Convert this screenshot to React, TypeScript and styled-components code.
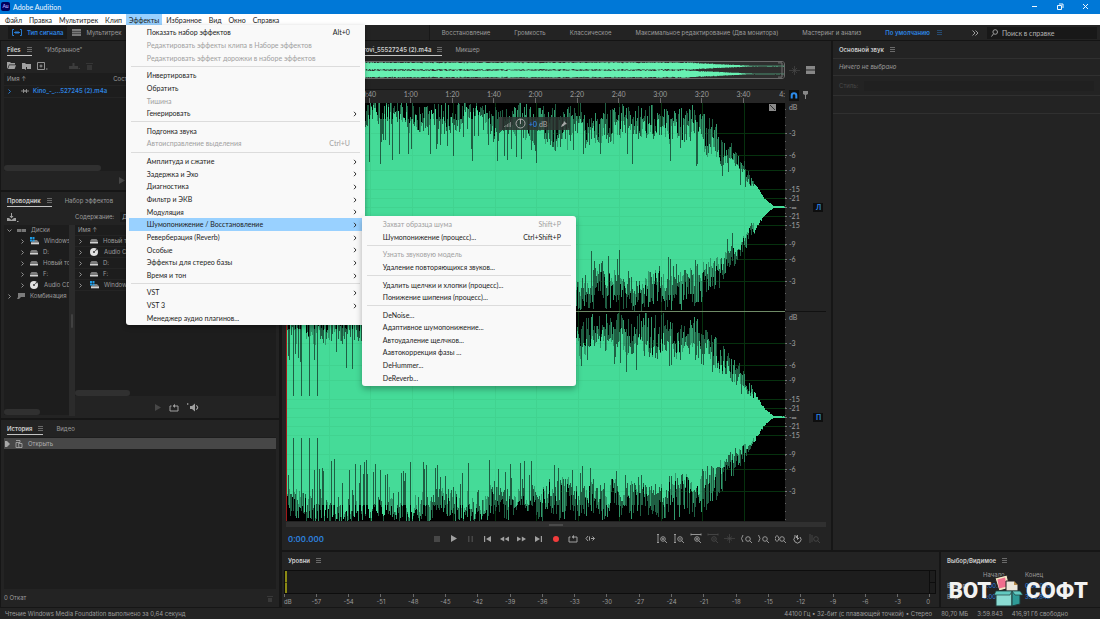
import React from "react";
import styled, { createGlobalStyle, css } from "styled-components";

const GlobalStyle = createGlobalStyle`
  * { box-sizing: border-box; }
  body { margin: 0; background: #161616; }
  button, input, select, table { font: inherit; color: inherit; }
  button { border: 0; padding: 0; background: none; display: flex; align-items: center; white-space: nowrap; text-align: left; }
  ul { list-style: none; margin: 0; padding: 0; }
  svg { display: block; flex: none; }
`;

const BLUE = "#2d84e0";
const GREEN = "#45db98";
const MENU_FONT = `Lato, "Liberation Sans", sans-serif`;

const Frame = styled.div`
  position: relative;
`;
const Page = styled.div`
  min-height: 100vh;
  display: flex;
  flex-direction: column;
  font-family: Inter, "Noto Sans", sans-serif;
  font-size: 6px;
  line-height: 10px;
  color: #9c9c9c;
  overflow: hidden;
`;

/* ---------- window chrome ---------- */

const TitleBar = styled.header`
  height: 14px;
  display: flex;
  align-items: center;
  gap: 3px;
  padding: 0 11px 1px 1px;
  background: #0078d7;
  color: #f0f8ff;
  font-family: ${MENU_FONT};
  font-size: 7px;
`;
const AppBadge = styled.span`
  width: 9px;
  height: 9px;
  border-radius: 2px;
  background: #00005b;
  color: #a6a6ff;
  font-size: 5px;
  font-weight: 700;
  line-height: 9px;
  text-align: center;
`;
const WindowButtons = styled.div`
  margin-left: auto;
  display: flex;
  gap: 18px;
`;
const MenuBar = styled.nav`
  height: 11px;
  display: flex;
  padding-left: 2px;
  background: #fff;
  color: #1b1b1b;
  font-family: ${MENU_FONT};
  font-size: 7px;
  position: relative;
  z-index: 5;
`;
const MenuSlot = styled.div`
  position: relative;
  display: flex;
`;
const MenuTitle = styled.button<{ $open?: boolean }>`
  padding: 0 3px;
  margin-right: 1px;
  background: ${(p) => (p.$open ? "#99d1ff" : "transparent")};
`;
const menuSurface = css`
  position: absolute;
  display: flex;
  flex-direction: column;
  background: #f9f9f9;
  border-radius: 0 0 3px 3px;
`;
const Menu = styled.div`
  ${menuSurface}
  top: 100%;
  left: 0;
  width: 239px;
  height: 300px;
  padding: 1px 3px;
  box-shadow: 0 2px 5px rgba(0, 0, 0, 0.35);
`;
const SubMenu = styled.div`
  ${menuSurface}
  top: -2px;
  left: 233px;
  width: 214px;
  height: 170px;
  padding: 2px 3px;
  border-radius: 3px;
  box-shadow: 0 3px 6px rgba(0, 0, 0, 0.3);
`;
const MenuRow = styled.div<{ $active?: boolean }>`
  flex: 1;
  min-height: 0;
  position: relative;
  display: flex;
  background: ${(p) => (p.$active ? "#99d1ff" : "transparent")};
`;
const MenuAction = styled.button`
  flex: 1;
  padding: 0 12px 0 18px;
  &:disabled { color: #a0a0a0; }
`;
const Shortcut = styled.span`
  margin-left: auto;
`;
const MenuArrow = styled.svg`
  position: absolute;
  right: 5px;
  top: 4px;
`;
const MenuRule = styled.hr`
  width: calc(100% - 4px);
  height: 1px;
  margin: 2px;
  border: 0;
  background: #dcdcdc;
`;

/* ---------- workspace bar ---------- */

const WorkspaceBar = styled.div`
  height: 16px;
  display: flex;
  align-items: center;
  padding: 0 3px 0 8px;
  border-bottom: 1px solid #141414;
  background: #232323;
`;
const ModeButton = styled.button<{ $on?: boolean }>`
  height: 13px;
  gap: 5px;
  padding: 0 4px;
  margin-right: 1px;
  font-weight: ${(p) => (p.$on ? 600 : 400)};
  color: ${(p) => (p.$on ? BLUE : "inherit")};
  background: ${(p) => (p.$on ? "#191919" : "transparent")};
`;
const Workspaces = styled.div`
  margin-left: auto;
  height: 15px;
  display: flex;
  align-items: center;
  gap: 24px;
  padding: 0 8px 0 12px;
  border-left: 1px solid #181818;
`;
const Workspace = styled.button<{ $on?: boolean }>`
  gap: 7px;
  color: ${(p) => (p.$on ? BLUE : "inherit")};
  font-weight: ${(p) => (p.$on ? 600 : 400)};
  &:last-child { margin-left: 6px; }
`;
const SearchBox = styled.label`
  width: 110px;
  height: 12px;
  display: flex;
  align-items: center;
  gap: 4px;
  padding-left: 4px;
  background: #181818;
`;
const SearchInput = styled.input`
  flex: 1;
  min-width: 0;
  border: 0;
  padding: 0;
  background: none;
  font-family: ${MENU_FONT};
  font-size: 7px;
  &::placeholder { color: #b4b4b4; opacity: 1; }
`;

/* ---------- panels ---------- */

const Body = styled.main`
  flex: 1;
  display: flex;
  gap: 3px;
  padding-left: 1px;
`;
const LeftColumn = styled.div`
  width: 278px;
  display: flex;
  flex-direction: column;
  gap: 2px;
`;
const MainColumn = styled.div`
  flex: 1;
  min-width: 0;
  display: flex;
  flex-direction: column;
  gap: 2px;
`;
const TopRow = styled.div`
  flex: 1;
  display: flex;
  gap: 2px;
`;
const BottomRow = styled.div`
  height: 55px;
  display: flex;
  gap: 2px;
`;
const Panel = styled.section<{ $height?: number; $width?: number }>`
  ${(p) => (p.$height ? `height: ${p.$height}px;` : p.$width ? "" : "flex: 1;")}
  ${(p) => (p.$width ? `width: ${p.$width}px;` : "")}
  min-width: 0;
  display: flex;
  flex-direction: column;
  background: #232323;
`;
const Tabs = styled.div`
  height: 17px;
  display: flex;
  align-items: flex-start;
  gap: 13px;
  padding: 3px 6px 0;
`;
const Tab = styled.button<{ $on?: boolean; $line?: boolean }>`
  height: 12px;
  gap: 6px;
  font-weight: ${(p) => (p.$on ? 600 : 400)};
  color: ${(p) => (p.$on ? "#cfcfcf" : "inherit")};
  border-bottom: 1px solid ${(p) => (p.$line ? "#c4c4c4" : "transparent")};
`;
const Tools = styled.div<{ $gap: number; $h: number; $justify?: string }>`
  height: ${(p) => p.$h}px;
  display: flex;
  align-items: center;
  justify-content: ${(p) => p.$justify || "flex-start"};
  gap: ${(p) => p.$gap}px;
  padding: 0 6px;
`;
const IconButton = styled.button<{ $dim?: boolean }>`
  color: ${(p) => (p.$dim ? "#474747" : "#a0a0a0")};
`;
const ListBox = styled.div<{ $flush?: boolean }>`
  flex: 1;
  min-height: 0;
  min-width: 0;
  margin: 0 3px 0 ${(p) => (p.$flush ? 0 : 3)}px;
  display: flex;
  flex-direction: column;
  justify-content: space-between;
  background: #1d1d1d;
`;
const Thumb = styled.div<{ $w: number }>`
  width: ${(p) => p.$w}px;
  height: 6px;
  border-radius: 3px;
  background: #303030;
`;
const FileTable = styled.table`
  width: 100%;
  border-collapse: collapse;
  th, td { padding: 0 3px; height: 12px; text-align: left; font-weight: 400; }
  th:last-child { width: 168px; }
  td { border-top: 1px solid #242424; border-bottom: 1px solid #242424; }
`;
const FileName = styled.span`
  display: flex;
  align-items: center;
  gap: 4px;
  color: ${BLUE};
  font-weight: 600;
  white-space: nowrap;
  svg:first-child { margin-right: 5px; }
`;
const BrowserSplit = styled.div`
  flex: 1;
  min-height: 0;
  display: flex;
`;
const Tree = styled.div`
  width: 65px;
  margin: 0 0 3px 3px;
  display: flex;
  flex-direction: column;
  justify-content: space-between;
  background: #1d1d1d;
`;
const TreeScroller = styled.div`
  width: 6px;
  margin-bottom: 2px;
  padding: 89px 2px 0;
  background: #2b2b2b;
  &::after { content: ""; display: block; height: 14px; border-radius: 1px; background: #414141; }
`;
const BrowserSide = styled.div`
  flex: 1;
  min-width: 0;
  display: flex;
  flex-direction: column;
`;
const TreeRow = styled.li<{ $depth?: number; $line?: boolean }>`
  height: 11px;
  display: flex;
  align-items: center;
  gap: 5px;
  padding-left: ${(p) => (p.$depth ? 16 : 3)}px;
  overflow: hidden;
  white-space: nowrap;
  border-bottom: 1px solid ${(p) => (p.$line ? "#242424" : "transparent")};
  svg:first-child { margin-right: ${(p) => (p.$line ? 2 : 0)}px; }
`;
const ContentField = styled.label`
  margin-left: 56px;
  display: flex;
  gap: 6px;
`;
const PlainSelect = styled.select`
  appearance: none;
  border: 0;
  padding: 0 2px;
  background: #1b1b1b;
  color: #b4b4b4;
`;
const HistoryRow = styled.li`
  height: 11px;
  margin-top: 1px;
  display: flex;
  align-items: center;
  gap: 5px;
  background: #474747;
  color: #b0b0b0;
`;
const PanelFooter = styled.div`
  height: 18px;
  display: flex;
  justify-content: space-between;
  align-items: center;
  padding: 0 6px 0 3px;
`;

/* ---------- editor ---------- */

const EditorGrid = styled.div`
  flex: 1;
  min-height: 0;
  display: grid;
  grid-template-columns: 1fr 41px;
  grid-template-rows: 31px 14px 1fr 6px;
  margin: 0 5px 0 4px;
`;
const Overview = styled.div`
  height: 18px;
  margin-top: 3px;
  border: 1px solid #6a6a6a;
  border-radius: 3px;
  background: #141414;
  overflow: hidden;
  svg { width: 100%; height: 100%; }
`;
const SideTools = styled.div<{ $pt: number; $gap: number }>`
  display: flex;
  align-items: flex-start;
  gap: ${(p) => p.$gap}px;
  padding: ${(p) => p.$pt}px 0 0 4px;
`;
const Ruler = styled.div`
  display: flex;
  border-top: 1px solid #161616;
  background: #262626;
  overflow: hidden;
`;
const RulerCell = styled.span<{ $half?: boolean; $last?: boolean }>`
  flex: ${(p) => (p.$half ? 1 : 2)} 1 0;
  min-width: 0;
  height: 13px;
  display: flex;
  flex-direction: column;
  align-items: center;
  line-height: 8px;
  font-size: 7px;
  font-family: ${MENU_FONT};
  ${(p) => p.$last && "align-items: flex-end; overflow: hidden;"}
  &::after {
    content: "";
    width: 1px;
    height: 5px;
    background: ${(p) => (p.$half ? "transparent" : "#6a6a6a")};
  }
`;
const WaveArea = styled.div`
  position: relative;
  background: #000;
  border-left: 1px solid #a01818;
  min-height: 0;
`;
const WaveSvg = styled.svg`
  position: absolute;
  inset: 0;
  width: 100%;
  height: 100%;
`;
const Hud = styled.div`
  position: absolute;
  top: 14px;
  left: 212px;
  width: 71px;
  height: 13px;
  display: flex;
  align-items: center;
  gap: 3px;
  padding: 0 2px;
  background: rgba(45, 50, 48, 0.85);
  border-left: 3px solid #3a3f3d;
  color: #a8a8a8;
  font-size: 7px;
  font-family: ${MENU_FONT};
  b { font-weight: 600; color: ${BLUE}; }
`;
const CornerMark = styled.svg`
  position: absolute;
  top: 1px;
  right: 9px;
`;
const ScaleSvg = styled.svg`
  width: 41px;
  height: 100%;
  fill: #a0a0a0;
  font-size: 7px;
  font-family: ${MENU_FONT};
`;
const WaveScroll = styled.div`
  grid-column: 1 / -1;
  display: flex;
  justify-content: center;
  align-items: center;
  margin-top: 1px;
  background: #303030;
  &::after { content: ""; width: 14px; height: 2px; background: #4a4a4a; }
`;
const Transport = styled.div`
  height: 23px;
  display: flex;
  align-items: center;
  padding: 0 8px 0 6px;
`;
const TimeCode = styled.output`
  width: 140px;
  padding-top: 1px;
  font-family: "Open Sans", sans-serif;
  font-size: 9px;
  font-weight: 600;
  color: ${BLUE};
`;
const ButtonStrip = styled.div`
  display: grid;
  grid-auto-flow: column;
  grid-auto-columns: 17px;
  justify-items: center;
`;
const Spring = styled.div`
  flex: 1;
`;

/* ---------- essential sound, levels, selection ---------- */

const SoundRow = styled.div<{ $h: number }>`
  height: ${(p) => p.$h}px;
  display: flex;
  align-items: center;
  padding: 0 6px;
  border-bottom: 1px solid #303030;
  font-style: ${(p) => (p.$h === 17 ? "italic" : "normal")};
`;
const StyleLabel = styled.label`
  flex: 1;
  display: flex;
  align-items: center;
  gap: 6px;
  color: #484848;
  select { flex: 1; background: #202020; }
`;
const Meter = styled.div`
  height: 24px;
  margin: 1px 3px 0 2px;
  display: flex;
  border: 1px solid #0d0d0d;
  background: #1d1d1d;
`;
const MeterFill = styled.div`
  width: 2px;
  background: linear-gradient(#8c8a14 11px, #4a490c 11px, #4a490c 12px, #8c8a14 12px);
`;
const MeterClip = styled.div`
  width: 6px;
  margin-left: auto;
  border-left: 1px solid #0d0d0d;
  background: linear-gradient(transparent 11px, #0d0d0d 11px, #0d0d0d 12px, transparent 12px);
`;
const LevelScale = styled.div`
  display: flex;
  margin: 0 9px 0 2px;
`;
const LevelCell = styled.span<{ $half?: boolean; $end?: boolean }>`
  flex: ${(p) => (p.$half ? 1 : 2)} 1 0;
  min-width: 0;
  display: flex;
  flex-direction: column;
  line-height: 9px;
  align-items: ${(p) => (p.$end ? "flex-end" : p.$half ? "flex-start" : "center")};
  &::before { content: ""; width: 1px; height: 3px; background: #6a6a6a; }
`;
const SelectionTable = styled.table`
  margin-left: 6px;
  width: 132px;
  table-layout: fixed;
  border-collapse: collapse;
  th, td { padding: 0; height: 11px; font-weight: 400; text-align: left; }
  th:nth-child(1), thead td { width: 36px; }
  th:nth-child(2) { width: 42px; }
  td { color: ${BLUE}; }
`;
const StatusBar = styled.footer`
  height: 12px;
  display: flex;
  align-items: center;
  gap: 9px;
  padding: 0 32px 0 5px;
  border-top: 1px solid #161616;
  background: #232323;
  span:first-child { margin-right: auto; }
`;
const Watermark = styled.div`
  position: absolute;
  right: 12px;
  bottom: 12px;
  z-index: 6;
  display: flex;
  align-items: center;
  gap: 3px;
  font-family: Roboto, sans-serif;
  font-size: 22px;
  line-height: 32px;
  font-weight: 900;
  color: #f2f2f2;
`;

/* ---------- icons ---------- */

type IconProps = { w?: number; h?: number; sw?: number; fill?: boolean; children?: React.ReactNode };
const Icon = ({ w = 10, h = 10, sw = 1, fill, children }: IconProps) => (
  <svg
    width={w}
    height={h}
    viewBox={`0 0 ${w} ${h}`}
    fill={fill ? "currentColor" : "none"}
    stroke={fill ? "none" : "currentColor"}
    strokeWidth={sw}
    aria-hidden="true"
  >
    {children}
  </svg>
);
const Burger = () => (
  <Icon w={5} h={5} sw={0.6}><path d="M0 .5h5M0 2.5h5M0 4.5h5" opacity=".7" /></Icon>
);
const Chevron = ({ down }: { down?: boolean }) => (
  <Icon w={5} h={5} sw={0.9}><path d={down ? "M.5 1.5 2.5 3.5 4.5 1.5" : "M1.5.5 3.5 2.5 1.5 4.5"} /></Icon>
);
const DriveIcon = () => (
  <Icon w={8} h={6} fill><path d="M1.5 1h5L8 3H0z" opacity=".75" /><rect y="3.4" width="8" height="2" rx=".5" fill="#d2d2d2" /></Icon>
);
const WindowsDrive = () => (
  <Icon w={9} h={8} fill>
    <path d="M3 3h4L8.8 5H1z" opacity=".75" />
    <rect x="1" y="5.3" width="8" height="2" fill="#d2d2d2" />
    <path d="M0 0h2v2H0zM2.5 0h2v2h-2zM0 2.5h2v2H0zM2.5 2.5h2v2h-2z" fill="#1c9be6" />
  </Icon>
);
const DiscIcon = () => (
  <Icon w={9} h={8} fill>
    <circle cx="4" cy="4" r="4" fill="#e2e2e2" />
    <path d="M4 4 7.6 1.4 6.6.4z" fill="#444" />
    <circle cx="4" cy="4" r="1" fill="#333" />
  </Icon>
);
const DrivesIcon = () => (
  <Icon w={9} h={5} fill><path d="M0 1h4v3H0zM4.5 1H9v3H4.5z" opacity=".7" /></Icon>
);
const FlagIcon = () => (
  <Icon w={8} h={6} fill><path d="M1 0h7v4H4L2 6H0l1-2z" opacity=".75" /></Icon>
);
const WaveIcon = () => (
  <Icon w={8} h={6} sw={0.8}><path d="M0 3h8M2.5 1v4M4 2v2M5.5 1v4" stroke="#a0a0a0" /></Icon>
);
const LoopIcon = () => (
  <Icon w={10} h={9}><path d="M2.5 3H1v5h8V3H4" /><path d="M6 .8 4 3l2 2z" fill="currentColor" stroke="none" /></Icon>
);
const PlayIcon = () => (
  <Icon w={6} h={7} fill><path d="M0 0l6 3.5L0 7z" /></Icon>
);
const Magnifier = ({ extra, plus = "" }: { extra: string; plus?: string }) => (
  <Icon w={12} h={11} sw={0.9}>
    <path d={extra} />
    <circle cx="7" cy="6" r="2.3" />
    <path d={"M8.7 7.7 11 10" + plus} />
  </Icon>
);

/* ---------- waveform ---------- */

const random = (seed: number) => () => {
  seed = (seed * 1664525 + 1013904223) % 4294967296;
  return seed / 4294967296;
};
const FADE: [number, number][] = [
  [0, 1], [400, 1], [414, 0.94], [431, 0.8], [439, 0.68], [452, 0.52], [461, 0.38],
  [469, 0.22], [477, 0.09], [486, 0.01], [498, 0.004],
];
const fadeAt = (x: number) => {
  for (let i = 1; i < FADE.length; i++) {
    const [x0, y0] = FADE[i - 1];
    const [x1, y1] = FADE[i];
    if (x <= x1) return y0 + ((y1 - y0) * (x - x0)) / (x1 - x0);
  }
  return 0;
};
const COLS = 498;
const buildHalf = (seed: number, mid: number, dir: 1 | -1) => {
  const rnd = random(seed);
  let dark = "";
  let soft = "";
  let solid = "";
  let base = 0.84;
  for (let x = 0; x < COLS; x++) {
    const fade = fadeAt(x);
    const calm = x > 466;
    base += (rnd() - 0.5) * 0.12;
    const [lo, hi] = x < 198 ? [0.76, 0.92] : x < 300 ? [0.62, 0.78] : [0.62, 0.78];
    base = Math.max(lo, Math.min(hi, base));
    let body = base + (rnd() - 0.5) * 0.18;
    let peak = body + rnd() * 0.2;
    let faint = rnd() < 0.55;
    if (rnd() < 0.4) peak = 0.84 + rnd() * 0.16;
    if (rnd() < (x < 300 ? 0.24 : 0.14)) {
      body = 0.4 + rnd() * 0.4;
      peak = Math.max(0.85, body + 0.2);
      faint = true;
    }
    if (x === 6 || x === 14 || x === 22 || x === 30) {
      body = 0.2;
      peak = 0.9;
      faint = true;
    }
    if (calm) {
      body = 0.82 + rnd() * 0.18;
      peak = body;
    }
    const a = Math.max(1, Math.round(Math.min(1, peak) * fade * 104)) * dir;
    const b = Math.max(0.5, Math.round(Math.min(0.98, body) * fade * 104)) * dir;
    if (faint) dark += `M${x} ${mid}h1v${a}h-1z`;
    else soft += `M${x} ${mid}h1v${a}h-1z`;
    solid += `M${x} ${mid}h1v${b}h-1z`;
  }
  return { dark, soft, solid };
};
const HALVES = [buildHalf(11, 104, -1), buildHalf(23, 104, 1), buildHalf(37, 314, -1), buildHalf(53, 314, 1)];

const overviewPath = (mid: number, seed: number) => {
  const rnd = random(seed);
  let d = "";
  for (let x = 0; x < COLS; x++) {
    const f = x < 400 ? 1 : Math.max(0.08, 1 - (x - 400) / 72);
    const up = (0.75 + rnd() * 0.25) * 4.4 * f;
    d += `M${x} ${(mid - up).toFixed(1)}h1v${(up * 2).toFixed(1)}h-1z`;
  }
  return d;
};

const DB_MARKS: [string, number][] = [
  ["dB", 4], ["-3", 30], ["-6", 52], ["-9", 67], ["-15", 86], ["-21", 95], ["-∞", 104],
  ["-21", 113], ["-15", 122], ["-9", 141], ["-6", 156], ["-3", 178],
];
const pct = (v: number) => `${(v / 418) * 100}%`;
const TIMES = ["0:20", "0:40", "1:00", "1:20", "1:40", "2:00", "2:20", "2:40", "3:00", "3:20", "3:40"];
const LEVELS = Array.from({ length: 19 }, (_, i) => String(-57 + i * 3));

const GridLines = ({ opacity }: { opacity: number }) => (
  <g fill="#0a4a16" opacity={opacity}>
    {TIMES.map((t, i) => <rect key={t} x={(i + 1) * 41.5} y="0" width="1" height="418" />)}
    {[0, 210].map((o) =>
      DB_MARKS.slice(1).map(([, y], i) => <rect key={`${o}-${i}`} x="0" y={y + o} width="498" height="1" />)
    )}
  </g>
);

const Waveform = () => (
  <WaveSvg viewBox="0 0 498 418" preserveAspectRatio="none" shapeRendering="crispEdges" role="img" aria-label="Сигнал">
    <GridLines opacity={0.65} />
    {HALVES.map((h, i) => (
      <g key={i}>
        <path d={h.dark} fill="#1f5f43" />
        <path d={h.soft} fill="#319a6c" />
        <path d={h.solid} fill={GREEN} />
      </g>
    ))}
    <GridLines opacity={0.05} />
    <rect x="0" y="208" width="498" height="1" fill="#6e8a66" />
    <rect x="484" y="104" width="14" height="1" fill={GREEN} />
    <rect x="484" y="314" width="14" height="1" fill={GREEN} />
  </WaveSvg>
);

const DbScale = () => (
  <ScaleSvg aria-hidden="true">
    {[0, 210].map((o) => (
      <g key={o}>
        {DB_MARKS.map(([t, y], i) => (
          <React.Fragment key={i}>
            <text x="4" y={pct(y + o)} dy="3">{t}</text>
            {i > 0 && <rect x="0" y={pct(y + o)} width="2" height="1" fill="#777" />}
          </React.Fragment>
        ))}
        {Array.from({ length: 26 }, (_, i) => (
          <rect key={`t${i}`} x="0" y={pct(o + 6 + i * 8)} width="1" height="1" fill="#666" />
        ))}
      </g>
    ))}
    <rect x="0" y={pct(208)} width="41" height="1" fill="#111" />
    <rect x="28" y={pct(100)} width="10" height="9" fill="#0e0e0e" />
    <text x="31" y={pct(107)} fill={BLUE} fontWeight="700">Л</text>
    <rect x="28" y={pct(310)} width="10" height="9" fill="#0e0e0e" />
    <text x="31" y={pct(317)} fill={BLUE} fontWeight="700">П</text>
  </ScaleSvg>
);

/* ---------- menus ---------- */

type Entry = { label: string; key?: string; off?: boolean; more?: boolean; sub?: Entry[][] };

const DENOISE: Entry[][] = [
  [{ label: "Захват образца шума", key: "Shift+P", off: true }, { label: "Шумопонижение (процесс)...", key: "Ctrl+Shift+P" }],
  [{ label: "Узнать звуковую модель", off: true }, { label: "Удаление повторяющихся звуков..." }],
  [{ label: "Удалить щелчки и хлопки (процесс)..." }, { label: "Понижение шипения (процесс)..." }],
  [
    { label: "DeNoise..." }, { label: "Адаптивное шумопонижение..." }, { label: "Автоудаление щелчков..." },
    { label: "Аавтокоррекция фазы ..." }, { label: "DeHummer..." }, { label: "DeReverb..." },
  ],
];
const EFFECTS: Entry[][] = [
  [
    { label: "Показать набор эффектов", key: "Alt+0" },
    { label: "Редактировать эффекты клипа в Наборе эффектов", off: true },
    { label: "Редактировать эффект дорожки в наборе эффектов", off: true },
  ],
  [{ label: "Инвертировать" }, { label: "Обратить" }, { label: "Тишина", off: true }, { label: "Генерировать", more: true }],
  [{ label: "Подгонка звука" }, { label: "Автоисправление выделения", key: "Ctrl+U", off: true }],
  [
    { label: "Амплитуда и сжатие", more: true }, { label: "Задержка и Эхо", more: true }, { label: "Диагностика", more: true },
    { label: "Фильтр и ЭКВ", more: true }, { label: "Модуляция", more: true },
    { label: "Шумопонижение / Восстановление", more: true, sub: DENOISE },
    { label: "Реверберация (Reverb)", more: true }, { label: "Особые", more: true },
    { label: "Эффекты для стерео базы", more: true }, { label: "Время и тон", more: true },
  ],
  [{ label: "VST", more: true }, { label: "VST 3", more: true }, { label: "Менеджер аудио плагинов..." }],
];

const MenuGroups = ({ groups }: { groups: Entry[][] }) => (
  <>
    {groups.map((group, g) => (
      <React.Fragment key={g}>
        {g > 0 && <MenuRule />}
        {group.map((e) => (
          <MenuRow key={e.label} $active={!!e.sub}>
            <MenuAction disabled={e.off}>
              {e.label}
              {e.key && <Shortcut>{e.key}</Shortcut>}
            </MenuAction>
            {e.more && (
              <MenuArrow width="4" height="6" viewBox="0 0 4 6" fill="none" stroke="#333" aria-hidden="true">
                <path d="M1 .8 3 3 1 5.2" />
              </MenuArrow>
            )}
            {e.sub && <SubMenu><MenuGroups groups={e.sub} /></SubMenu>}
          </MenuRow>
        ))}
      </React.Fragment>
    ))}
  </>
);

const MENUS = ["Файл", "Правка", "Мультитрек", "Клип", "Эффекты", "Избранное", "Вид", "Окно", "Справка"];
const WORKSPACES = ["Восстановление", "Громкость", "Классическое", "Максимальное редактирование (Два монитора)", "Мастеринг и анализ"];

const LeftPanels = () => (
  <LeftColumn>
    <Panel $height={149}>
      <Tabs>
        <Tab $on $line>Files<Burger /></Tab>
        <Tab>"Избранное"</Tab>
      </Tabs>
      <Tools $gap={6} $h={15}>
        <IconButton aria-label="Открыть"><Icon w={9} h={7} fill><path d="M0 0h3l1 1h4v1.5H2L.5 6.5H0zM2.4 3.2H9L7.6 7H1z" /></Icon></IconButton>
        <IconButton aria-label="Импорт"><Icon w={9} h={8} fill><path d="M0 1h3l1 1h5v5H5V5H3v2H0zM1 6l3-2v4z" /></Icon></IconButton>
        <IconButton aria-label="Создать"><Icon w={11} h={8} sw={0.9}><path d="M.5.5h7v7h-7zM2.5 4h3M4 2.5v3M9 7h1.5" /></Icon></IconButton>
        <Icon w={9} h={8} />
        <IconButton $dim aria-label="Вставить"><Icon w={11} h={8} fill><path d="M0 4h9v3H0zM3.5 1h2v3h-2zM9.5 6h1.5v1H9.5z" opacity=".7" /></Icon></IconButton>
        <IconButton $dim aria-label="Удалить"><Icon w={7} h={8} fill><path d="M0 1h7v1H0zM1 3h5v5H1z" opacity=".5" /></Icon></IconButton>
      </Tools>
      <ListBox>
        <FileTable>
          <thead><tr><th scope="col">Имя ↑</th><th scope="col">Сост.</th></tr></thead>
          <tbody>
            <tr>
              <td><FileName><Chevron /><WaveIcon />Kino_-_...527245 (2).m4a</FileName></td>
              <td />
            </tr>
          </tbody>
        </FileTable>
        <Thumb $w={97} />
      </ListBox>
      <Tools $gap={4} $h={19} $justify="center">
        <IconButton $dim aria-label="Воспроизвести"><PlayIcon /></IconButton>
        <Icon w={32} h={7} />
      </Tools>
    </Panel>

    <Panel $height={226}>
      <Tabs>
        <Tab $on $line>Проводник<Burger /></Tab>
        <Tab>Набор эффектов</Tab>
      </Tabs>
      <Tools $gap={0} $h={16}>
        <IconButton aria-label="Ярлыки"><Icon w={12} h={9} fill><path d="M4 0h1v3h1.5l-2 2.5-2-2.5H4zM0 5h2l2.5 2L7 5h2v3H0zM10 8h1.5v1H10z" /></Icon></IconButton>
        <ContentField>Содержание:<PlainSelect><option>Диски</option></PlainSelect></ContentField>
      </Tools>
      <BrowserSplit>
        <Tree>
          <ul>
            <TreeRow><Chevron down /><DrivesIcon />Диски</TreeRow>
            <TreeRow $depth={1}><Chevron /><WindowsDrive />Windows</TreeRow>
            <TreeRow $depth={1}><Chevron /><DriveIcon />D:</TreeRow>
            <TreeRow $depth={1}><Chevron /><DriveIcon />Новый том</TreeRow>
            <TreeRow $depth={1}><Chevron /><DriveIcon />F:</TreeRow>
            <TreeRow $depth={1}><Chevron /><DiscIcon />Audio CD</TreeRow>
            <TreeRow><Chevron /><FlagIcon />Комбинация</TreeRow>
          </ul>
          <Thumb $w={36} />
        </Tree>
        <TreeScroller />
        <BrowserSide>
          <ListBox $flush>
            <ul>
              <TreeRow $line>Имя ↑</TreeRow>
              <TreeRow $line><Chevron /><DriveIcon />Новый том</TreeRow>
              <TreeRow $line><Chevron /><DiscIcon />Audio CD</TreeRow>
              <TreeRow $line><Chevron /><DriveIcon />D:</TreeRow>
              <TreeRow $line><Chevron /><DriveIcon />F:</TreeRow>
              <TreeRow $line><Chevron /><WindowsDrive />Windows</TreeRow>
            </ul>
            <Thumb $w={55} />
          </ListBox>
          <Tools $gap={8} $h={22} $justify="center">
            <IconButton $dim aria-label="Воспроизвести"><PlayIcon /></IconButton>
            <IconButton aria-label="Повтор"><LoopIcon /></IconButton>
            <IconButton aria-label="Автовоспроизведение"><Icon w={12} h={9} fill><path d="M0 0l2 1-2 1zM3 3h2l3-2.5v8L5 6H3zM9 2c3 1 3 4 0 5V6c1.5-1 1.5-2 0-3z" /></Icon></IconButton>
          </Tools>
        </BrowserSide>
      </BrowserSplit>
    </Panel>

    <Panel>
      <Tabs>
        <Tab $on $line>История<Burger /></Tab>
        <Tab>Видео</Tab>
      </Tabs>
      <ListBox>
        <ul>
          <HistoryRow>
            <Icon w={6} h={6} fill><path d="M1 0h2l3 3-3 3H1z" fill="#a8a8a8" /></Icon>
            <Icon w={8} h={8} sw={0.8}><path d="M1 .5h4v2h-4v5h3M3.5 3.5h3.5v4H4z" /></Icon>
            Открыть
          </HistoryRow>
        </ul>
      </ListBox>
      <PanelFooter>
        0 Откат
        <IconButton $dim aria-label="Удалить"><Icon w={6} h={7} fill><path d="M0 1h6v1H0zM1 3h4v4H1z" opacity=".6" /></Icon></IconButton>
      </PanelFooter>
    </Panel>
  </LeftColumn>
);

const PLAYBACK: [string, boolean, React.ReactNode][] = [
  ["Стоп", true, <Icon w={6} h={6} fill><path d="M0 0h6v6H0z" /></Icon>],
  ["Воспроизвести", false, <PlayIcon />],
  ["Пауза", true, <Icon w={5} h={6} fill><path d="M0 0h1.5v6H0zM3.5 0H5v6H3.5z" /></Icon>],
  ["В начало", false, <Icon w={7} h={6} fill><path d="M0 0h1.2v6H0zM7 0v6L2 3z" /></Icon>],
  ["Назад", false, <Icon w={9} h={6} fill><path d="M4.2.5v5L0 3zM9 .5v5L4.7 3z" /></Icon>],
  ["Вперёд", false, <Icon w={9} h={6} fill><path d="M0 .5v5L4.2 3zM4.8.5v5L9 3z" /></Icon>],
  ["В конец", false, <Icon w={7} h={6} fill><path d="M0 0v6l5-3zM5.8 0H7v6H5.8z" /></Icon>],
  ["Запись", false, <Icon w={6} h={6} fill><circle cx="3" cy="3" r="3" fill="#f23c3c" /></Icon>],
  ["Повтор", false, <LoopIcon />],
  ["Пропуск", false, <Icon w={10} h={7}><path d="M3 1 1 3.5 3 6M4.5 1.5v4M6 3.5h3.5M7.5 1.5l2 2-2 2" /></Icon>],
];
const PLUS = "M5.8 6h2.4M7 4.8v2.4";
const MINUS = "M5.8 6h2.4";
const ZOOMS: [string, boolean, React.ReactNode][] = [
  ["Увеличить амплитуду", false, <Magnifier extra="M2 1v9M1 2l1-1 1 1M1 9l1 1 1-1" plus={PLUS} />],
  ["Уменьшить амплитуду", false, <Magnifier extra="M2 1v9M1 2l1-1 1 1M1 9l1 1 1-1" plus={MINUS} />],
  ["Увеличить время", false, <Magnifier extra="M1 1.5h10M1 .5v2M11 .5v2" plus={PLUS} />],
  ["Уменьшить время", true, <Magnifier extra="M1 1.5h10M1 .5v2M11 .5v2" plus={MINUS} />],
  ["Сбросить", true, <Icon w={11} h={9}><path d="M0 4.5h11M5.5 0v9M3 2.5l5 4M8 2.5l-5 4" opacity=".7" /></Icon>],
  ["К началу", false, <Magnifier extra="M2 2 .5 5.5 2 9" />],
  ["К концу", false, <Magnifier extra="M.5 2 2 5.5.5 9" />],
  ["К выделению", false, <Magnifier extra="M1.5 2.5 0 5.5l1.5 3M2.5 2.5 4 5.5l-1.5 3" />],
  ["Тайминг", false, <Icon w={9} h={10}><path d="M2 3a3.5 3.5 0 1 0 5 0M4.5 1v4.5L6 4M1 2h2.5v2" /></Icon>],
  ["Весь файл", true, <Magnifier extra="M1 1v9M3 2v7" />],
];

const Editor = () => (
  <Panel>
    <Tabs>
      <Tab $on $line>Редактор: Kino_Gruppa_krovi_55527245 (2).m4a<Burger /></Tab>
      <Tab>Микшер</Tab>
    </Tabs>
    <EditorGrid>
      <Overview>
        <svg viewBox="0 0 498 18" preserveAspectRatio="none">
          <rect width="498" height="18" fill="#2e2e2e" />
          <path d={overviewPath(4.6, 5)} fill="#67f0b2" />
          <path d={overviewPath(13.4, 9)} fill="#67f0b2" />
          <path d="M492 1h4v16h-4" fill="none" stroke="#777" />
        </svg>
      </Overview>
      <SideTools $pt={8} $gap={6}>
        <IconButton $dim aria-label="Навигация"><Icon w={11} h={9}><path d="M0 4.5h11M5.5 0v9M3 2l5 5M8 2 3 7" opacity=".7" /></Icon></IconButton>
        <IconButton aria-label="Список"><Icon w={9} h={8} fill><path d="M0 0h9v3.500H0zM0 4.5h9V8H0z" opacity=".8" /></Icon></IconButton>
      </SideTools>
      <Ruler>
        <RulerCell $half />
        {TIMES.map((t) => <RulerCell key={t}>{t}</RulerCell>)}
        <RulerCell $half $last>4:</RulerCell>
      </Ruler>
      <SideTools $pt={1} $gap={4}>
        <IconButton aria-label="Привязка">
          <svg width="10" height="11" viewBox="0 0 10 11">
            <rect width="10" height="11" fill="#101010" />
            <path d="M2.700 8.500V5.500a2.300 2.300 0 0 1 4.600 0v3" fill="none" stroke="#2d8ceb" strokeWidth="2" />
          </svg>
        </IconButton>
        <IconButton aria-label="Маркер"><Icon w={5} h={9} fill><path d="M0 1h5v3L3 5v4H2V5L0 4z" opacity=".8" /></Icon></IconButton>
      </SideTools>
      <WaveArea>
        <Waveform />
        <Hud>
          <Icon w={8} h={6} fill><path d="M0 5h1v1H0zM1.5 4h1v2h-1zM3 3h1v3H3zM4.5 2h1v4h-1zM6 1h1v5H6z" opacity=".6" /></Icon>
          <Icon w={11} h={11}><circle cx="5.5" cy="5.5" r="4.5" /><path d="M5.5 1v5" /></Icon>
          <span><b>+0</b> dB</span>
          <Spring />
          <Icon w={8} h={8} fill><path d="M4 1l3 3-2 .5L3.5 6 1 7l1-2.500L3.5 3z" /></Icon>
        </Hud>
        <CornerMark width="7" height="7" viewBox="0 0 7 7" aria-hidden="true">
          <rect width="7" height="7" fill="#8a8a8a" /><path d="M1 1l5 5" stroke="#333" />
        </CornerMark>
      </WaveArea>
      <DbScale />
      <WaveScroll />
    </EditorGrid>
    <Transport>
      <TimeCode>0:00.000</TimeCode>
      <ButtonStrip>
        {PLAYBACK.map(([name, dim, icon]) => <IconButton key={name} $dim={dim} aria-label={name}>{icon}</IconButton>)}
      </ButtonStrip>
      <Spring />
      <ButtonStrip>
        {ZOOMS.map(([name, dim, icon]) => <IconButton key={name} $dim={dim} aria-label={name}>{icon}</IconButton>)}
      </ButtonStrip>
    </Transport>
  </Panel>
);

export default function App() {
  return (
    <Frame>
      <GlobalStyle />
      <Page>
        <TitleBar>
          <AppBadge>Au</AppBadge>
          Adobe Audition
          <WindowButtons>
            <button aria-label="Свернуть"><Icon w={7} h={7}><path d="M1 3.5h5" /></Icon></button>
            <button aria-label="Развернуть"><Icon w={8} h={7}><path d="M1.5 2.5h4v4h-4zM3 1h4v4" /></Icon></button>
            <button aria-label="Закрыть"><Icon w={7} h={7}><path d="M1 1l5 5M6 1 1 6" /></Icon></button>
          </WindowButtons>
        </TitleBar>
        <MenuBar>
          {MENUS.map((m) => (
            <MenuSlot key={m}>
              <MenuTitle $open={m === "Эффекты"}>{m}</MenuTitle>
              {m === "Эффекты" && <Menu><MenuGroups groups={EFFECTS} /></Menu>}
            </MenuSlot>
          ))}
        </MenuBar>
        <WorkspaceBar>
          <ModeButton $on>
            <Icon w={10} h={7} sw={0.9}><path d="M2 .5H.5v6H2M8 .5h1.500v6H8M2 3.5h6M4 2v3M6 2v3" /></Icon>
            Тип сигнала
          </ModeButton>
          <ModeButton>
            <Icon w={9} h={7} fill><path d="M0 0h9v2H0zM0 2.5h9v2H0zM0 5h9v2H0z" opacity=".7" /></Icon>
            Мультитрек
          </ModeButton>
          <Workspaces>
            {WORKSPACES.map((w) => <Workspace key={w}>{w}</Workspace>)}
            <Workspace $on>По умолчанию<Burger /></Workspace>
            <Workspace aria-label="Ещё"><Icon w={7} h={6}><path d="M.5.5 3 3 .5 5.500M3.5.5 6 3 3.5 5.500" /></Icon></Workspace>
          </Workspaces>
          <SearchBox>
            <Icon w={7} h={8}><circle cx="4.2" cy="3" r="2.3" /><path d="M2.5 4.8.5 7.5" /></Icon>
            <SearchInput placeholder="Поиск в справке" aria-label="Поиск в справке" />
          </SearchBox>
        </WorkspaceBar>
        <Body>
          <LeftPanels />
          <MainColumn>
            <TopRow>
              <Editor />
              <Panel $width={267}>
                <Tabs><Tab $on>Основной звук<Burger /></Tab></Tabs>
                <SoundRow $h={1} />
                <SoundRow $h={17}>Ничего не выбрано</SoundRow>
                <SoundRow $h={20}>
                  <StyleLabel>Стиль:<PlainSelect disabled><option /></PlainSelect></StyleLabel>
                </SoundRow>
                <SoundRow $h={18} />
              </Panel>
            </TopRow>
            <BottomRow>
              <Panel>
                <Tabs><Tab $on>Уровни<Burger /></Tab></Tabs>
                <Meter><MeterFill /><MeterClip /></Meter>
                <LevelScale>
                  <LevelCell $half>dB</LevelCell>
                  {LEVELS.map((l) => <LevelCell key={l}>{l}</LevelCell>)}
                  <LevelCell $half $end>0</LevelCell>
                </LevelScale>
              </Panel>
              <Panel $width={159}>
                <Tabs><Tab $on>Выбор/Видимое<Burger /></Tab></Tabs>
                <SelectionTable>
                  <thead><tr><td /><th scope="col">Начало</th><th scope="col">Конец</th></tr></thead>
                  <tbody>
                    <tr><th scope="row">Выбор</th><td>0:00.000</td><td>0:00.000</td></tr>
                    <tr><th scope="row">Вид</th><td>0:00.000</td><td>3:59.843</td></tr>
                  </tbody>
                </SelectionTable>
              </Panel>
            </BottomRow>
          </MainColumn>
        </Body>
        <StatusBar>
          <span>Чтение Windows Media Foundation выполнено за 0,64 секунд</span>
          <span>44100 Гц • 32-бит (с плавающей точкой) • Стерео</span>
          <span>80,70 МБ</span>
          <span>3:59.843</span>
          <span>416,91 Гб свободно</span>
        </StatusBar>
      </Page>
      <Watermark>
        ВОТ
        <svg width="29" height="33" viewBox="0 0 29 33" aria-hidden="true">
          <path d="M1 4 13 1l3 13-11 3z" fill="#f3e6c4" stroke="#222" />
          <path d="M3.5 5.5 11 3.5l2 9-8 2z" fill="#ef6f8e" />
          <path d="M12 7h8l4 4v8H12z" fill="#ece7db" stroke="#222" />
          <path d="M20 7v4h4z" fill="#b58a4a" />
          <path d="M2 17h16v15H2z" fill="#8adbd2" stroke="#1f3b3b" />
          <path d="M18 17h8v13l-8 2z" fill="#2e9a96" stroke="#1f3b3b" />
          <path d="M2 17 0 21h16l2-4zM26 17l3 4h-8l-3-4z" fill="#62c9c0" stroke="#1f3b3b" strokeWidth=".7" />
        </svg>
        СОФТ
      </Watermark>
    </Frame>
  );
}
